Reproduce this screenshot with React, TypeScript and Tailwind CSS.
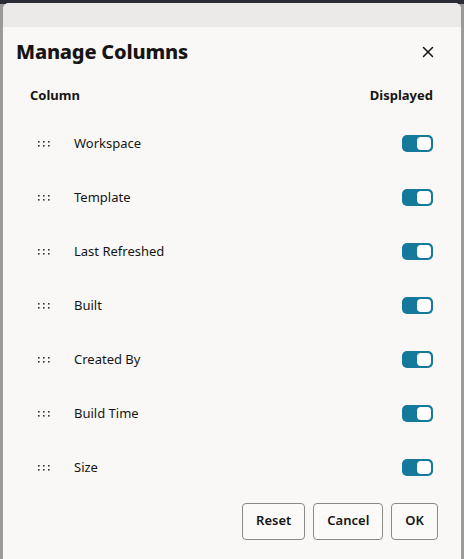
import { X } from "lucide-react";

const columns = [
  "Workspace",
  "Template",
  "Last Refreshed",
  "Built",
  "Created By",
  "Build Time",
  "Size",
];

function DragHandle() {
  return (
    <svg width="14" height="6" viewBox="0 0 14 6" className="text-[#3a3633]">
      {[1, 6, 11].map((x) => (
        <g key={x}>
          <rect x={x} y={0} width="1.6" height="1.6" fill="currentColor" />
          <rect x={x} y={4} width="1.6" height="1.6" fill="currentColor" />
        </g>
      ))}
    </svg>
  );
}

function Toggle() {
  return (
    <div className="flex h-[17px] w-[31px] items-center justify-end rounded-[5px] bg-[#15799c] p-[2px]">
      <div className="h-[13px] w-[14px] rounded-[4px] bg-white" />
    </div>
  );
}

export default function App() {
  return (
    <div
      className="relative h-[559px] w-[464px] overflow-hidden bg-[#9a9a9a]"
      style={{ fontFamily: '"Noto Sans", "Open Sans", sans-serif' }}
    >
      <div className="absolute inset-x-0 top-0 h-[4px] bg-[#2b2d36]" />
      {/* Dialog */}
      <div className="absolute left-[3px] right-[3px] top-[3px] bottom-0 flex flex-col rounded-t-[6px] bg-[#f9f8f6] text-[#161513]">
        <div className="h-[24px] rounded-t-[6px] bg-[#ebeae8]" />

        {/* Header */}
        <div className="flex items-center justify-between pl-[13px] pr-[24px] pt-[10px]">
          <h2 className="text-[20px] font-extrabold tracking-[-0.2px]">Manage Columns</h2>
          <X size={18} strokeWidth={2} className="text-[#161513]" />
        </div>

        {/* Table header */}
        <div className="mt-[19px] flex items-center justify-between pl-[27px] pr-[28px] text-[13px] font-bold">
          <span>Column</span>
          <span>Displayed</span>
        </div>

        {/* Rows */}
        <div className="mt-[11px] flex flex-col">
          {columns.map((c) => (
            <div key={c} className="flex h-[54px] items-center pl-[34px] pr-[28px]">
              <DragHandle />
              <span className="ml-[23px] flex-1 text-[13px]">{c}</span>
              <Toggle />
            </div>
          ))}
        </div>

        {/* Footer */}
        <div className="mt-[8px] flex justify-end gap-[8px] pr-[23px]">
          {["Reset", "Cancel", "OK"].map((b) => (
            <button
              key={b}
              className="h-[37px] rounded-[4px] border border-[#8c8985] bg-[#fbfaf9] px-[13px] text-[13px] font-semibold text-[#161513]"
            >
              {b}
            </button>
          ))}
        </div>
      </div>
    </div>
  );
}
